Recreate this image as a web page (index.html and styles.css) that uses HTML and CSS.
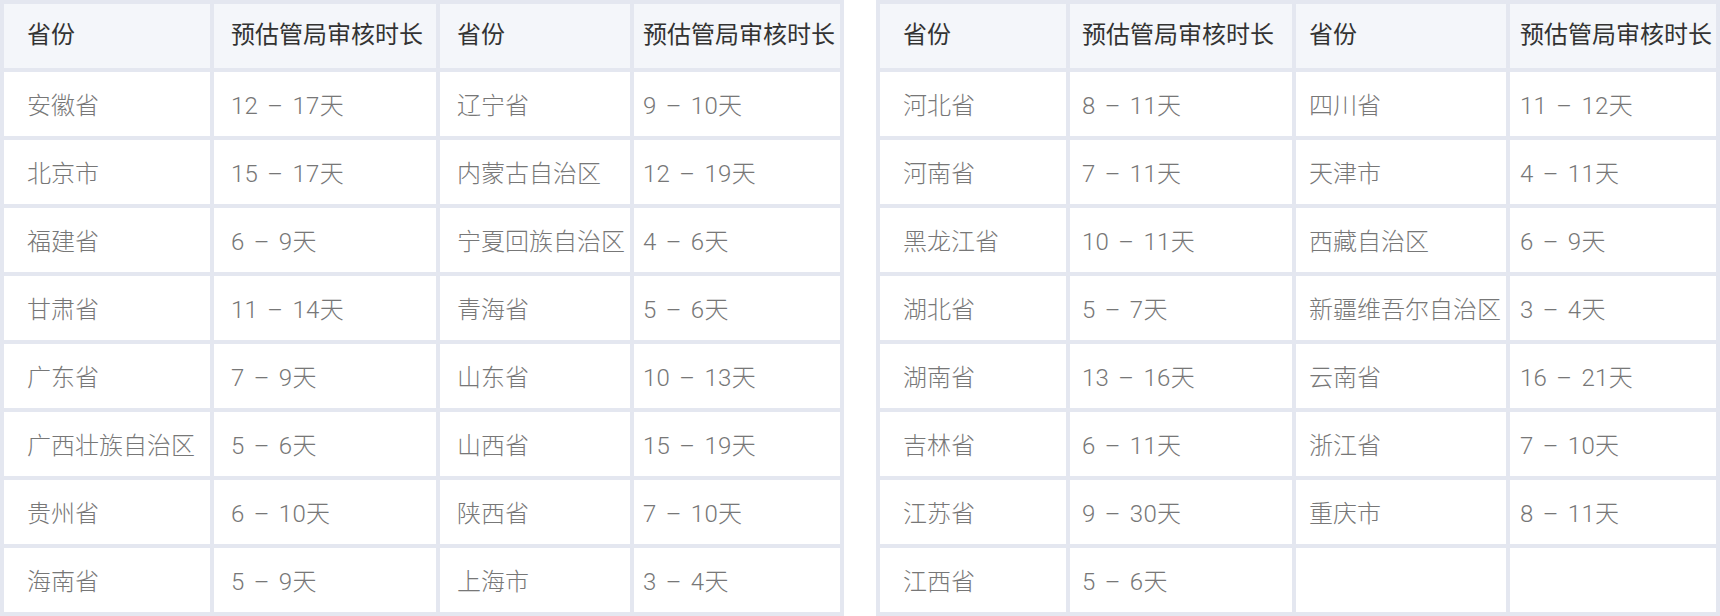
FILE: index.html
```html
<!DOCTYPE html>
<html lang="zh-CN">
<head>
<meta charset="utf-8">
<title>预估管局审核时长</title>
<link rel="stylesheet" href="styles.css">
</head>
<body>
<div class="page">
  <div class="grid grid-a">
    <div class="cell head c1">省份</div><div class="cell head c2">预估管局审核时长</div><div class="cell head c3">省份</div><div class="cell head c4">预估管局审核时长</div>
    <div class="cell c1">安徽省</div><div class="cell num c2">12 – 17天</div><div class="cell c3">辽宁省</div><div class="cell num c4">9 – 10天</div>
    <div class="cell c1">北京市</div><div class="cell num c2">15 – 17天</div><div class="cell c3">内蒙古自治区</div><div class="cell num c4">12 – 19天</div>
    <div class="cell c1">福建省</div><div class="cell num c2">6 – 9天</div><div class="cell c3">宁夏回族自治区</div><div class="cell num c4">4 – 6天</div>
    <div class="cell c1">甘肃省</div><div class="cell num c2">11 – 14天</div><div class="cell c3">青海省</div><div class="cell num c4">5 – 6天</div>
    <div class="cell c1">广东省</div><div class="cell num c2">7 – 9天</div><div class="cell c3">山东省</div><div class="cell num c4">10 – 13天</div>
    <div class="cell c1">广西壮族自治区</div><div class="cell num c2">5 – 6天</div><div class="cell c3">山西省</div><div class="cell num c4">15 – 19天</div>
    <div class="cell c1">贵州省</div><div class="cell num c2">6 – 10天</div><div class="cell c3">陕西省</div><div class="cell num c4">7 – 10天</div>
    <div class="cell c1">海南省</div><div class="cell num c2">5 – 9天</div><div class="cell c3">上海市</div><div class="cell num c4">3 – 4天</div>
  </div>
  <div class="grid grid-b">
    <div class="cell head c1">省份</div><div class="cell head c2">预估管局审核时长</div><div class="cell head c3">省份</div><div class="cell head c4">预估管局审核时长</div>
    <div class="cell c1">河北省</div><div class="cell num c2">8 – 11天</div><div class="cell c3">四川省</div><div class="cell num c4">11 – 12天</div>
    <div class="cell c1">河南省</div><div class="cell num c2">7 – 11天</div><div class="cell c3">天津市</div><div class="cell num c4">4 – 11天</div>
    <div class="cell c1">黑龙江省</div><div class="cell num c2">10 – 11天</div><div class="cell c3">西藏自治区</div><div class="cell num c4">6 – 9天</div>
    <div class="cell c1">湖北省</div><div class="cell num c2">5 – 7天</div><div class="cell c3">新疆维吾尔自治区</div><div class="cell num c4">3 – 4天</div>
    <div class="cell c1">湖南省</div><div class="cell num c2">13 – 16天</div><div class="cell c3">云南省</div><div class="cell num c4">16 – 21天</div>
    <div class="cell c1">吉林省</div><div class="cell num c2">6 – 11天</div><div class="cell c3">浙江省</div><div class="cell num c4">7 – 10天</div>
    <div class="cell c1">江苏省</div><div class="cell num c2">9 – 30天</div><div class="cell c3">重庆市</div><div class="cell num c4">8 – 11天</div>
    <div class="cell c1">江西省</div><div class="cell num c2">5 – 6天</div><div class="cell c3"></div><div class="cell c4"></div>
  </div>
</div>
</body>
</html>
```

FILE: styles.css
```css
html, body {
  margin: 0;
  padding: 0;
  background: #ffffff;
}

.page {
  display: flex;
  gap: 32px;
  width: 1720px;
  font-family: "Liberation Sans", "Noto Sans CJK SC", sans-serif;
  font-size: 24px;
}

.grid {
  display: grid;
  grid-auto-rows: 64px;
  gap: 4px;
  padding: 4px;
  background: #e4e7f0;
}

.grid-a {
  grid-template-columns: 206px 222px 190px 206px;
}

.grid-b {
  grid-template-columns: 186px 222px 210px 206px;
}

.cell {
  display: flex;
  align-items: center;
  box-sizing: border-box;
  padding-bottom: 1px;
  background: #ffffff;
  color: #777777;
  font-weight: 300;
  white-space: nowrap;
  overflow: hidden;
}

.cell.num {
  font-family: "Roboto", "Noto Sans CJK SC", sans-serif;
  font-weight: 300;
  word-spacing: 3px;
  letter-spacing: 0.3px;
}

.cell.head {
  background: #f4f6fa;
  color: #333333;
  font-weight: 400;
  padding-bottom: 8px;
}

.grid-a .c1 { padding-left: 23px; }
.grid-a .c2 { padding-left: 17px; }
.grid-a .c3 { padding-left: 17px; }
.grid-a .c4 { padding-left: 9px; }

.grid-b .c1 { padding-left: 23px; }
.grid-b .c2 { padding-left: 12px; }
.grid-b .c3 { padding-left: 13px; }
.grid-b .c4 { padding-left: 10px; }
```
